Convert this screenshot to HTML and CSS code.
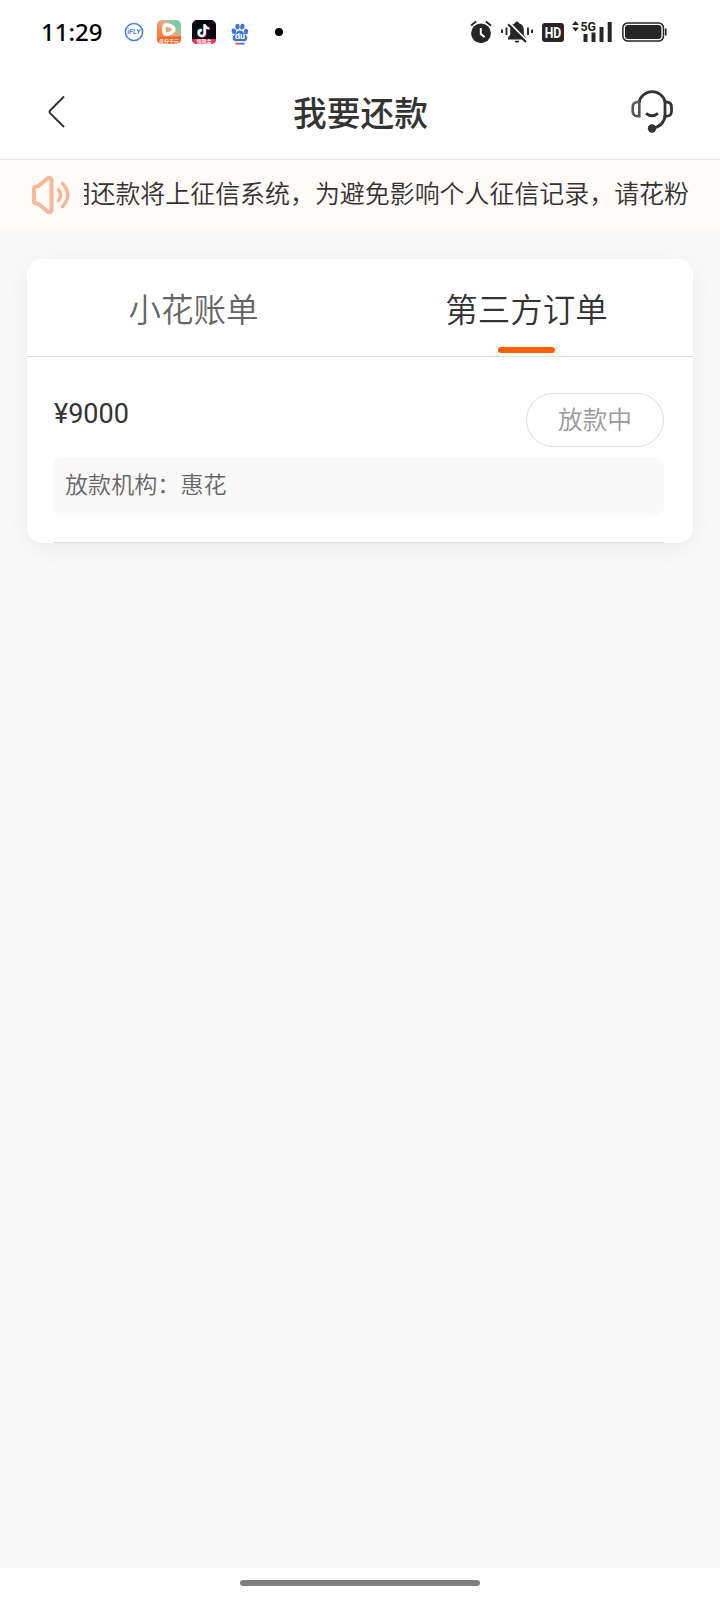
FILE: index.html
```
<!DOCTYPE html>
<html lang="zh-CN">
<head>
<meta charset="utf-8">
<title>我要还款</title>
<link rel="stylesheet" href="styles.css">
</head>
<body>
<div class="screen">
  <header class="status">
    <span class="clock">11:29</span>
    <div class="apps">
      <svg width="20" height="20" viewBox="0 0 20 20"><circle cx="10" cy="10" r="8.6" fill="#fff" stroke="#437dde" stroke-width="1.5"/><text x="10" y="12.2" text-anchor="middle" class="t-fly" textLength="13" lengthAdjust="spacingAndGlyphs">iFLY</text></svg>
      <svg width="24" height="24" viewBox="0 0 24 24"><defs><linearGradient id="v" x1="0" y1="1" x2="1" y2="0"><stop offset=".3" stop-color="#f98535"/><stop offset=".55" stop-color="#e6ad7c"/><stop offset=".85" stop-color="#6ecdb0"/></linearGradient></defs><rect width="24" height="24" rx="5" fill="url(#v)"/><path d="M0 17.500 24 16V19a5 5 0 0 1-5 5H5a5 5 0 0 1-5-5Z" fill="#f3662d"/><path d="M8.500 5C6.800 5.200 6.800 7.500 6.800 10s.5 4.200 2.700 4.200c3.300 0 7.300-2.200 7.300-4.700S11.800 4.600 8.500 5Z" fill="none" stroke="#fff" stroke-width="3.600" stroke-linejoin="round"/><text x="12" y="22.700" text-anchor="middle" class="t-app">瓜分千元</text></svg>
      <svg width="24" height="24" viewBox="0 0 24 24"><rect width="24" height="24" rx="5" fill="#080713"/><path d="M0 19H24a5 5 0 0 1-5 5H5a5 5 0 0 1-5-5Z" fill="#ef3657"/><g fill="none" stroke-width="2.200"><path d="M12.200 4V12.700a3 3 0 1 1-3-3M12.200 4c.3 2.500 1.900 3.900 4.400 4.100" stroke="#38d9df"/><path d="M13.400 4.800V13.500a3 3 0 1 1-3-3M13.400 4.800c.3 2.500 1.900 3.900 4.400 4.100" stroke="#ee3c62"/><path d="M12.800 4.400V13.100a3 3 0 1 1-3-3M12.800 4.400c.3 2.500 1.900 3.900 4.400 4.100" stroke="#fff"/></g><text x="12" y="23.200" text-anchor="middle" class="t-app">领现金</text></svg>
      <svg class="paw" width="18" height="22" viewBox="0 0 18 22"><g fill="#3f74df"><ellipse cx="2.900" cy="8.300" rx="2.200" ry="2.800" transform="rotate(-12 2.900 8.300)"/><ellipse cx="6.500" cy="3.600" rx="2.100" ry="2.900"/><ellipse cx="11.300" cy="3.700" rx="2.100" ry="2.900" transform="rotate(12 11.300 3.700)"/><ellipse cx="15" cy="8.500" rx="2.100" ry="2.700"/><path d="M9 7.500c2.400 0 3 1.800 4.800 3.400 1.600 1.400 2.900 2.600 2.400 5-.5 2.400-2.900 2.500-7.200 2.200-4.300.3-6.700.2-7.200-2.200-.5-2.400.8-3.600 2.400-5C6 9.300 6.600 7.500 9 7.500Z"/></g><text x="9" y="16.300" text-anchor="middle" class="t-du">du</text><path d="M4.500 20.700H9" stroke="#e2504c" stroke-width="1.800"/><path d="M9 20.700h4.500" stroke="#3f74df" stroke-width="1.800"/></svg>
      <i class="more"></i>
    </div>
    <div class="system">
      <svg width="22" height="24" viewBox="0 0 22 24"><circle cx="11" cy="13.300" r="9.900" fill="#262626"/><path d="M1 5.500 6.200 1.500M21 5.500 15.800 1.500" stroke="#262626" stroke-width="2"/><path d="M10.800 8v6l3.800 3" fill="none" stroke="#fff" stroke-width="2"/></svg>
      <svg class="bell" width="32" height="24" viewBox="0 0 32 24"><path d="M16 1.500a2 2 0 0 1 2 1.700c3.100.8 4.800 3.200 4.800 6.500v5l2.200 3v1.800H7v-1.800l2.200-3v-5c0-3.300 1.700-5.700 4.800-6.500a2 2 0 0 1 2-1.700ZM13.700 20.800h4.600a2.300 2 0 0 1-4.600 0Z" fill="#262626"/><path d="M8.700 3.300 26 20.600" stroke="#fff" stroke-width="2"/><path d="M7.200 4.200 25 22" stroke="#262626" stroke-width="2"/><path d="M1 9.500v3.500M5.500 7.500v7.500M27 7.500v7.500M31 9.500v3.500" stroke="#262626" stroke-width="1.900"/></svg>
      <svg class="hd" width="22" height="19" viewBox="0 0 22 19"><rect width="22" height="19" rx="3" fill="#262626"/><text x="11" y="14.800" text-anchor="middle" class="t-hd" textLength="16.500" lengthAdjust="spacingAndGlyphs">HD</text></svg>
      <svg class="signal" width="40" height="24" viewBox="0 0 40 24"><path d="M0 5 3.500 1 7 5ZM0 7.500h7L3.500 11.500Z" fill="#262626"/><text x="8.500" y="10.800" class="t-5g" textLength="15.500" lengthAdjust="spacingAndGlyphs">5G</text><path d="M13.500 14v8M21.500 12.500v9.500M29.500 7v15M37.700 2v20" stroke="#262626" stroke-width="4"/></svg>
      <svg class="battery" width="45" height="20" viewBox="0 0 45 20"><rect x=".9" y=".9" width="40.600" height="18.200" rx="5" fill="none" stroke="#262626" stroke-width="1.500"/><rect x="3" y="3" width="36.400" height="14" rx="3" fill="#262626"/><path d="M43.800 6.500v7" stroke="#262626" stroke-width="1.600"/></svg>
    </div>
  </header>

  <nav class="nav">
    <svg class="back" width="18" height="34" viewBox="0 0 18 34"><path d="M16 1.500 2.300 15.200q-1.500 1.600 0 3.200L16 32" fill="none" stroke="#333" stroke-width="2"/></svg>
    <h1 class="title">我要还款</h1>
    <svg class="service" width="42" height="44" viewBox="0 0 42 44"><g fill="none" stroke="#333" stroke-width="2.800"><path d="M8 13.500A13.400 13.400 0 0 1 34.300 13.500"/><path d="M8.300 13H6.500Q1.700 13.500 1.700 18v4.500Q2 27 6.500 27.200H8.300Z" stroke="#555" stroke-width="2.600"/><path d="M34 13h1.800q4.700.5 4.700 5v4.500q-.3 4.500-4.700 4.700H34Z"/><path d="M34.200 26.500C33 34 28.500 38.300 21 39.200"/><path d="M15 24.300q6 5 12 0"/></g><circle cx="21" cy="39.500" r="4.200" fill="#333"/></svg>
  </nav>

  <div class="notice">
    <svg class="horn" width="38" height="38" viewBox="0 0 38 38"><g fill="none" stroke="#f5b897" stroke-width="4" stroke-linecap="round" stroke-linejoin="round"><path d="M2 13Q2 10.700 4.300 10.400L6.500 10 15.500 2.500Q18.500 1 19.500 3.500V34.500Q18.500 37 15.500 35.500L6.500 28 4.300 27.600Q2 27.300 2 25Z"/><path d="M26.500 13.500q4.300 5.500 0 11M30.500 7.500q10.500 11.500 0 23" stroke-width="3.400"/></g></svg>
    <div class="ticker"><span>期还款将上征信系统，为避免影响个人征信记录，请花粉</span></div>
  </div>

  <main class="main">
    <section class="card">
      <div class="tabs">
        <div class="tab">小花账单</div>
        <div class="tab active">第三方订单</div>
      </div>
      <article class="order">
        <div class="order-head">
          <span class="amount">¥9000</span>
          <span class="state">放款中</span>
        </div>
        <div class="lender">放款机构：惠花</div>
      </article>
    </section>
  </main>

  <footer class="gesture"><i class="handle"></i></footer>
</div>
</body>
</html>
```
FILE: styles.css
```
* { box-sizing: border-box; }
body {
  margin: 0;
  font-family: Roboto, "Noto Sans CJK SC", sans-serif;
  color: #333;
  background: #fff;
}
svg { display: block; flex: none; }
.screen { width: 720px; height: 1600px; display: flex; flex-direction: column; overflow: hidden; }

.status { height: 64px; display: flex; align-items: center; padding: 0 53px 0 41px; }
.clock { width: 83px; font: 500 24px/30px "Noto Sans", sans-serif; color: #000; }
.apps { display: flex; align-items: center; }
.apps svg + svg { margin-left: 11px; }
.apps svg:first-child { margin-right: 2px; }
.apps .paw { margin: 3px 0 0 15px; }
.more { width: 8px; height: 8px; margin-left: 26px; border-radius: 50%; background: #000; }
.system { margin-left: auto; display: flex; align-items: center; }
.bell { margin-left: 9px; }
.hd { margin: 1px 0 0 9px; }
.signal { margin-left: 8px; }
.battery { margin-left: 10px; }
.t-fly { font: italic 700 6px Inter, sans-serif; fill: #437dde; }
.t-app { font: 700 5px "Noto Sans CJK SC", sans-serif; fill: #fff; }
.t-du { font: 700 8px Inter, sans-serif; fill: #fff; }
.t-hd { font: 700 15px Roboto, sans-serif; fill: #fff; }
.t-5g { font: 700 13.500px Roboto, sans-serif; fill: #262626; }

.nav {
  height: 96px;
  padding: 0 47px 0 48px;
  display: flex;
  align-items: center;
  justify-content: space-between;
  border-bottom: 1px solid #e3e3e3;
}
.title { margin: 6px 0 0 24px; font-size: 33.700px; line-height: 48px; font-weight: 500; }
.service { margin-bottom: 1px; }

.notice {
  height: 69px;
  padding: 0 31px 0 32px;
  display: flex;
  align-items: center;
  background: #fffbf8;
}
.ticker {
  width: 605px;
  margin-left: 14px;
  display: flex;
  justify-content: flex-end;
  overflow: hidden;
  white-space: nowrap;
  font-size: 24.950px;
  line-height: 40px;
  color: #333;
}
.ticker span { flex: none; font-weight: 350; }

.main { flex: 1; padding: 30px 27px 0; background: #f9f9f9; }
.card { height: 284px; border-radius: 15px; background: #fff; box-shadow: 0 6px 24px rgba(0, 0, 0, .06); }
.tabs { height: 98px; display: flex; border-bottom: 1px solid #ddd; }
.tab {
  flex: 1;
  display: flex;
  flex-direction: column;
  align-items: center;
  padding-top: 28px;
  font-size: 32.500px;
  line-height: 48px;
  font-weight: 350;
  color: #666;
}
.tab.active { color: #333; }
.tab.active::after { content: ""; width: 57px; height: 6px; margin-top: 12px; border-radius: 3px; background: #fe6000; }
.order { height: 186px; margin: 0 29px 0 27px; padding-top: 36px; border-bottom: 1px solid #ddd; }
.order-head { height: 64px; display: flex; justify-content: space-between; align-items: flex-start; }
.amount { font-size: 27px; line-height: 42px; }
.state {
  width: 138px;
  height: 54px;
  border: 1px solid #ddd;
  border-radius: 27px;
  text-align: center;
  font-size: 24.700px;
  line-height: 54px;
  font-weight: 350;
  color: #999;
}
.lender {
  height: 58px;
  padding-left: 11px;
  border-radius: 8px;
  background: #f9f9f9;
  box-shadow: 0 4px 12px rgba(0, 0, 0, .015);
  font-size: 23.100px;
  line-height: 58px;
  font-weight: 350;
  color: #666;
}

.gesture { height: 32px; display: flex; justify-content: center; padding-top: 12px; background: #fff; }
.handle { width: 240px; height: 6px; border-radius: 3px; background: #808080; }
```
